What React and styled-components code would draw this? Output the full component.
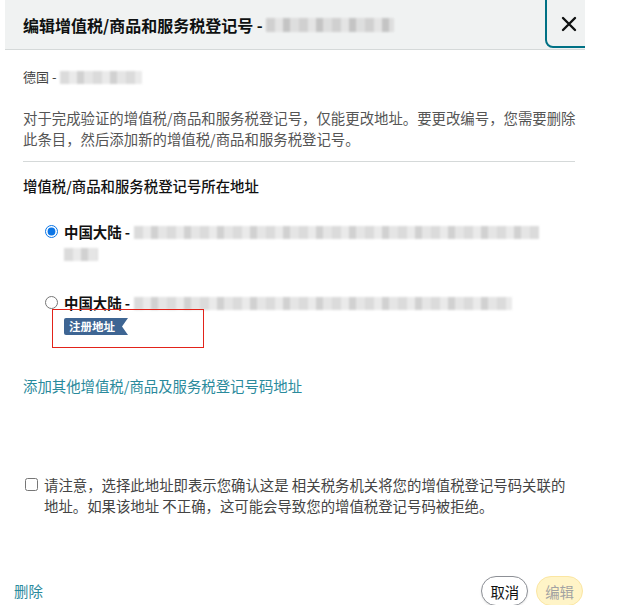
import React from "react";
import styled, { createGlobalStyle } from "styled-components";

const GlobalStyle = createGlobalStyle`
  html, body {
    margin: 0;
    padding: 0;
    background: #ffffff;
  }
  body {
    font-family: "Noto Sans CJK SC", "Noto Sans", "Liberation Sans", sans-serif;
    color: #333;
  }
`;

const Modal = styled.div`
  width: 580px;
  height: 605px;
  margin-left: 5px;
  display: flex;
  flex-direction: column;
  overflow: hidden;
  background: #fff;
`;

const Header = styled.div`
  height: 49px;
  flex-shrink: 0;
  display: flex;
  align-items: center;
  padding-left: 18px;
  background: #f0f2f2;
  border-bottom: 1px solid #d5d9d9;
  overflow: hidden;
`;

const Title = styled.h1`
  margin: 0;
  font-size: 16px;
  font-weight: 700;
  color: #0f1111;
  display: flex;
  align-items: center;
  gap: 3px;
`;

const CloseButton = styled.button`
  align-self: flex-start;
  margin-left: auto;
  margin-top: -10px;
  margin-right: -14px;
  width: 54px;
  height: 58px;
  padding: 10px 6px 0 0;
  display: flex;
  align-items: center;
  justify-content: center;
  background: #f0f2f2;
  border: 2px solid #007185;
  border-radius: 8px;
  color: #0f1111;
  cursor: pointer;
`;

const Blur = styled.span`
  display: inline-block;
  width: ${({ w }) => w}px;
  height: ${({ h }) => h || 13}px;
  vertical-align: middle;
  background: repeating-linear-gradient(
    90deg,
    #cfcfcf 0,
    #cfcfcf 9px,
    #e4e4e4 9px,
    #e4e4e4 17px,
    #c2c2c2 17px,
    #c2c2c2 24px,
    #dddddd 24px,
    #dddddd 33px
  );
  filter: blur(0.8px);
  opacity: ${({ light }) => (light ? 0.75 : 0.95)};
`;

const Body = styled.div`
  padding: 0 10px 0 18px;
  display: flex;
  flex-direction: column;
`;

const Country = styled.div`
  margin-top: 17px;
  font-size: 13px;
  line-height: 20px;
  color: #444;
  display: flex;
  align-items: center;
  gap: 4px;
`;

const Notice = styled.p`
  margin: 20px 0 0;
  width: 556px;
  font-size: 14.4px;
  line-height: 21px;
  color: #555;
`;

const Divider = styled.hr`
  margin: 12px 0 0;
  width: 552px;
  border: none;
  border-top: 1px solid #d5d9d9;
`;

const SectionTitle = styled.h2`
  margin: 14px 0 0;
  font-size: 14.4px;
  line-height: 20px;
  font-weight: 500;
  color: #111;
`;

const RadioRow = styled.label`
  position: relative;
  margin-top: ${({ gap }) => gap}px;
  padding-left: 22px;
  display: flex;
  align-items: flex-start;
  gap: 6px;
`;

const Radio = styled.input`
  margin: 4px 0 0;
  width: 13px;
  height: 13px;
  accent-color: #0b75e6;
  flex-shrink: 0;
`;

const RadioText = styled.div`
  font-size: 14.4px;
  line-height: 22px;
  color: #111;
`;

const Place = styled.span`
  font-weight: 700;
  margin-right: 4px;
`;

const BlurLine = styled.div`
  display: flex;
  align-items: center;
  height: 22px;
`;

const Badge = styled.span`
  display: inline-block;
  margin-top: 2px;
  padding: 0 13px 0 5px;
  height: 17px;
  line-height: 17px;
  font-size: 11.5px;
  font-weight: 700;
  color: #fff;
  background: #3e6593;
  border-radius: 2px 0 0 2px;
  clip-path: polygon(0 0, 100% 0, calc(100% - 6px) 50%, 100% 100%, 0 100%);
`;

const Highlight = styled.div`
  position: absolute;
  left: 29px;
  top: 17px;
  width: 150px;
  height: 37px;
  border: 1.5px solid #e2231a;
  pointer-events: none;
`;

const AddLink = styled.a`
  margin-top: 40px;
  font-size: 14.4px;
  line-height: 20px;
  color: #2a8a9c;
  text-decoration: none;
`;

const Consent = styled.label`
  margin-top: 78px;
  display: flex;
  align-items: flex-start;
  gap: 6px;
  padding-left: 2px;
`;

const Checkbox = styled.input`
  margin: 4px 0 0;
  width: 13px;
  height: 13px;
  flex-shrink: 0;
`;

const ConsentText = styled.div`
  width: 530px;
  font-size: 14.4px;
  line-height: 21px;
  color: #444;
`;

const Footer = styled.div`
  margin-top: auto;
  padding: 0 2px 0 9px;
  height: 32px;
  display: flex;
  align-items: center;
  gap: 8px;
`;

const DeleteLink = styled.a`
  margin-right: auto;
  margin-top: 2px;
  font-size: 14.4px;
  color: #2a8a9c;
  text-decoration: none;
`;

const PillButton = styled.button`
  height: 30px;
  padding: 0 8px;
  margin-top: 4px;
  border-radius: 15px;
  font-family: inherit;
  font-size: 14.4px;
  border: 1px solid ${({ primary }) => (primary ? "#fbe6a2" : "#8d9096")};
  background: ${({ primary }) => (primary ? "#fff4c7" : "#ffffff")};
  color: ${({ primary }) => (primary ? "#a3a3a3" : "#0f1111")};
  box-shadow: ${({ primary }) => (primary ? "none" : "0 1px 2px rgba(15,17,17,0.1)")};
`;

function CloseIcon() {
  return (
    <svg width="18" height="18" viewBox="0 0 18 18" fill="none">
      <path d="M3 3 L15 15 M15 3 L3 15" stroke="#0f1111" strokeWidth="2.4" strokeLinecap="round" />
    </svg>
  );
}

export default function App() {
  return (
    <>
      <GlobalStyle />
      <Modal>
        <Header>
          <Title>
            编辑增值税/商品和服务税登记号 -
            <Blur w={128} h={14} />
          </Title>
          <CloseButton aria-label="关闭">
            <CloseIcon />
          </CloseButton>
        </Header>
        <Body>
          <Country>
            德国 -
            <Blur w={82} light />
          </Country>
          <Notice>
            对于完成验证的增值税/商品和服务税登记号，仅能更改地址。要更改编号，您需要删除此条目，然后添加新的增值税/商品和服务税登记号。
          </Notice>
          <Divider />
          <SectionTitle>增值税/商品和服务税登记号所在地址</SectionTitle>

          <RadioRow gap={25}>
            <Radio type="radio" name="addr" defaultChecked />
            <RadioText>
              <BlurLine>
                <Place>中国大陆 -</Place>
                <Blur w={405} light />
              </BlurLine>
              <BlurLine>
                <Blur w={34} light />
              </BlurLine>
            </RadioText>
          </RadioRow>

          <RadioRow gap={27}>
            <Radio type="radio" name="addr" />
            <RadioText>
              <BlurLine>
                <Place>中国大陆 -</Place>
                <Blur w={378} light />
              </BlurLine>
              <Badge>注册地址</Badge>
            </RadioText>
            <Highlight />
          </RadioRow>

          <AddLink href="#">添加其他增值税/商品及服务税登记号码地址</AddLink>

          <Consent>
            <Checkbox type="checkbox" />
            <ConsentText>
              请注意，选择此地址即表示您确认这是 相关税务机关将您的增值税登记号码关联的地址。如果该地址 不正确，这可能会导致您的增值税登记号码被拒绝。
            </ConsentText>
          </Consent>
        </Body>
        <Footer>
          <DeleteLink href="#">删除</DeleteLink>
          <PillButton>取消</PillButton>
          <PillButton primary>编辑</PillButton>
        </Footer>
      </Modal>
    </>
  );
}
